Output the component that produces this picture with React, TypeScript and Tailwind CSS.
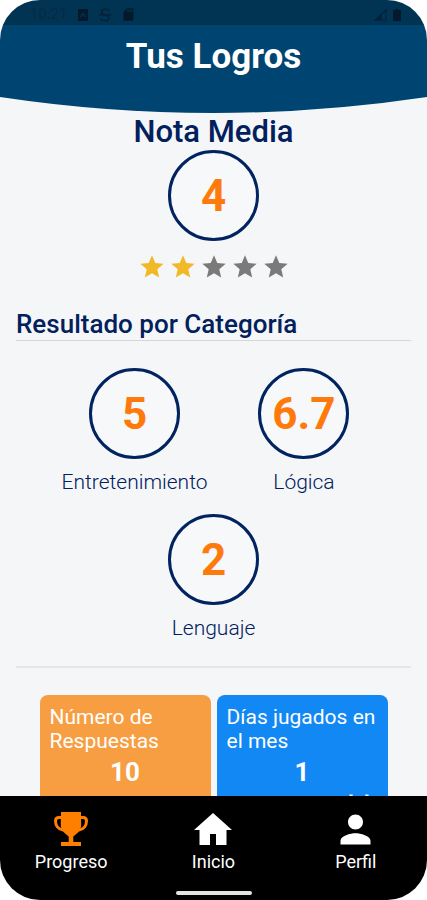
import type { ReactNode } from "react";
import { MdEvent, MdPerson, MdQuestionAnswer, MdSdCard, MdStar } from "react-icons/md";

const STARS = 5;

const categories = [
	[
		{ name: "Entretenimiento", score: "5" },
		{ name: "Lógica", score: "6.7" },
	],
	[{ name: "Lenguaje", score: "2" }],
];

function StatusBar() {
	return (
		<div className="flex h-[25px] items-center justify-between bg-[#003452] pt-1 pr-[26px] pl-[30px] text-[#062a45]">
			<div className="flex items-center gap-2.5">
				<span className="text-[15px]">10:21</span>
				<svg viewBox="0 0 12 12" className="size-3" fill="#04192b">
					<path d="M1 0h10v12H1zM6 3 3 8h1.5L6 5.5 7.5 8H9z" fillRule="evenodd" />
				</svg>
				<svg
					viewBox="0 0 12 14"
					className="h-3.5 w-3"
					fill="none"
					stroke="#04213a"
					strokeWidth="1.6"
				>
					<path d="M10.5 3C9 .5 2.5.5 2.5 4S10 6.500 10 10 3 13.500 1.500 11M0 7h12" />
				</svg>
				<MdSdCard size={15} className="text-[#04192b]" />
			</div>
			<div className="flex items-center gap-1.5">
				<svg
					viewBox="0 0 13 12"
					className="h-3 w-[13px]"
					fill="none"
					stroke="#04213a"
					strokeWidth="1.2"
				>
					<path d="M12 1v10H1z" />
					<path d="M7 6v5H2z" fill="#04213a" />
				</svg>
				<svg viewBox="0 0 8 12" className="h-3 w-2" fill="#04192b">
					<path d="M2.5 0h3v1H8v11H0V1h2.5z" />
				</svg>
			</div>
		</div>
	);
}

function Header() {
	return (
		<header>
			<div className="h-[72px] bg-[#004571] pt-[11px]">
				<h1 className="text-center text-[35px] leading-[42px] font-bold text-white">
					Tus Logros
				</h1>
			</div>
			<svg
				viewBox="0 0 427 17"
				preserveAspectRatio="none"
				className="block h-[17px] w-full"
			>
				<path d="M0 0Q213.5 32 427 0z" fill="#004571" />
			</svg>
		</header>
	);
}

function ScoreCircle({ score }: { score: string }) {
	return (
		<div className="flex size-[91px] items-center justify-center rounded-full border-[3px] border-[#012461] bg-[#f6f8f9] text-[44px] leading-none font-bold text-[#ff7a0c]">
			{score}
		</div>
	);
}

function Rating({ value }: { value: number }) {
	return (
		<div className="mt-3 flex justify-center gap-[3px]">
			{Array.from({ length: STARS }, (_, i) => (
				<MdStar
					key={i}
					size={28}
					className={i < value ? "text-[#f1b927]" : "text-[#7b7a7a]"}
				/>
			))}
		</div>
	);
}

function StatCard({
	label,
	value,
	icon,
	className,
}: {
	label: string;
	value: string;
	icon: ReactNode;
	className: string;
}) {
	return (
		<div className={`w-[171px] rounded-lg px-2.5 pt-2.5 pb-3 text-white ${className}`}>
			<p className="text-[21px] leading-6">{label}</p>
			<p className="mt-1 text-center text-[26px] leading-[30px] font-bold">{value}</p>
			<div className="mt-1.5 flex justify-end">{icon}</div>
		</div>
	);
}

function TrophyIcon() {
	return (
		<svg viewBox="0 0 34 34" className="size-[34px]" fill="currentColor">
			<path d="M7 0h20v4c0 2 .2 4 .2 8 0 4-1 6.500-3.200 8.500l-4.700 4V30H27v4H7v-4h7.700v-5.500l-4.700-4C7.800 18.500 6.800 16 6.800 12 6.800 8 7 6 7 4z" />
			<path
				d="M8 5.500H5C3 5.500 1.500 6.800 1.500 9c0 4.500 2.500 8.300 7.500 9M26 5.500h3c2 0 3.500 1.300 3.500 3.500 0 4.500-2.500 8.300-7.500 9"
				fill="none"
				stroke="currentColor"
				strokeWidth="3"
			/>
		</svg>
	);
}

function HomeIcon() {
	return (
		<svg viewBox="0 0 38 32" className="h-8 w-[38px]" fill="currentColor">
			<path d="M19 0l19 17h-5.5v15H22V21h-6v11H5.5V17H0z" />
		</svg>
	);
}

function NavItem({
	label,
	icon,
	active,
}: {
	label: string;
	icon: ReactNode;
	active?: boolean;
}) {
	return (
		<a href="#" className="flex flex-1 flex-col items-center text-white">
			<span
				className={`flex h-[42px] items-center justify-center ${active ? "text-[#ff7f00]" : "text-white"}`}
			>
				{icon}
			</span>
			<span className="text-[18px] leading-6">{label}</span>
		</a>
	);
}

export default function App() {
	return (
		<div className="min-h-screen bg-white font-['Roboto',sans-serif]">
			<div className="flex h-screen flex-col overflow-hidden rounded-[40px] bg-[#f4f6f8] text-[#01205c]">
				<StatusBar />
				<Header />

				<main className="min-h-0 flex-1 overflow-hidden px-4">
					<section className="flex flex-col items-center">
						<h2 className="text-[31px] leading-9 font-medium">Nota Media</h2>
						<ScoreCircle score="4" />
						<Rating value={2} />
					</section>

					<section className="border-b-2 border-[#e4e6e8] pb-[26px]">
						<h2 className="mt-7 border-b border-[#d5d8db] text-[26px] leading-[31px] font-medium">
							Resultado por Categoría
						</h2>
						<div className="mt-[27px] flex flex-col gap-5">
							{categories.map((row, i) => (
								<div
									key={i}
									className={`flex justify-center gap-[51px] ${row.length > 1 ? "pr-4" : ""}`}
								>
									{row.map((category) => (
										<div
											key={category.name}
											className="flex flex-col items-center gap-[11px]"
										>
											<ScoreCircle score={category.score} />
											<span className="text-[21px] leading-6 font-light">
												{category.name}
											</span>
										</div>
									))}
								</div>
							))}
						</div>
					</section>

					<section className="mt-[27px] flex justify-center gap-1.5">
						<StatCard
							label="Número de Respuestas"
							value="10"
							icon={<MdQuestionAnswer size={38} className="mt-2" />}
							className="bg-[#f79e43]"
						/>
						<StatCard
							label="Días jugados en el mes"
							value="1"
							icon={<MdEvent size={38} />}
							className="bg-[#1188f3]"
						/>
					</section>
				</main>

				<nav className="flex h-[104px] flex-col items-center justify-between bg-black pt-3 pb-[5px]">
					<div className="flex w-full">
						<NavItem label="Progreso" icon={<TrophyIcon />} active />
						<NavItem label="Inicio" icon={<HomeIcon />} />
						<NavItem label="Perfil" icon={<MdPerson size={45} />} />
					</div>
					<div className="h-1 w-[76px] rounded-full bg-[#e4e4e4]" />
				</nav>
			</div>
		</div>
	);
}
